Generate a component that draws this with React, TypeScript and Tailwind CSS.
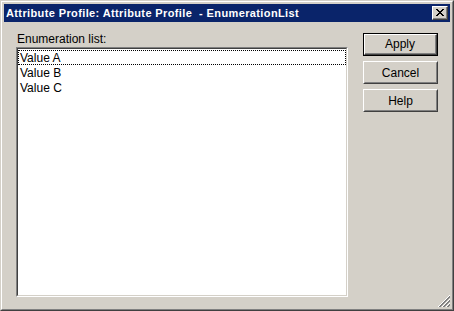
import React from 'react';

const font = { fontFamily: '"Liberation Sans", Arial, sans-serif' };

const CloseGlyph = () => (
  <svg width="8" height="7" viewBox="0 0 8 7" shapeRendering="crispEdges">
    <path
      d="M0 0h2v1H0zM6 0h2v1H6zM1 1h2v1H1zM5 1h2v1H5zM2 2h4v1H2zM3 3h2v1H3zM2 4h4v1H2zM1 5h2v1H1zM5 5h2v1H5zM0 6h2v1H0zM6 6h2v1H6z"
      fill="#000"
    />
  </svg>
);

const SizeGrip = () => (
  <svg width="12" height="12" viewBox="0 0 12 12" shapeRendering="crispEdges">
    {[0, 4, 8].map((o) => (
      <g key={o}>
        <path d={`M${o} 12 L12 ${o}`} stroke="#ffffff" strokeWidth="1" />
        <path d={`M${o + 1} 12 L12 ${o + 1}`} stroke="#808080" strokeWidth="1" />
        <path d={`M${o + 2} 12 L12 ${o + 2}`} stroke="#808080" strokeWidth="1" />
      </g>
    ))}
  </svg>
);

const Button: React.FC<{ label: string; isDefault?: boolean }> = ({ label, isDefault }) => {
  if (isDefault) {
    return (
      <div className="w-[75px] h-[23px] border border-black">
        <div className="w-full h-full border border-t-white border-l-white border-r-[#404040] border-b-[#404040]">
          <div className="w-full h-full flex items-center justify-center border-r border-b border-[#808080] text-[12px] text-black">
            {label}
          </div>
        </div>
      </div>
    );
  }
  return (
    <div className="w-[75px] h-[23px] border border-t-white border-l-white border-r-[#404040] border-b-[#404040]">
      <div className="w-full h-full flex items-center justify-center border-t border-l border-t-[#d4d0c8] border-l-[#d4d0c8] border-r border-b border-r-[#808080] border-b-[#808080] text-[12px] text-black">
        {label}
      </div>
    </div>
  );
};

const items = ['Value A', 'Value B', 'Value C'];

const App: React.FC = () => {
  return (
    <div
      className="relative w-[454px] h-[311px] bg-[#d4d0c8] border border-t-[#d4d0c8] border-l-[#d4d0c8] border-r-[#404040] border-b-[#404040]"
      style={font}
    >
      <div className="w-full h-full border border-t-white border-l-white border-r-[#808080] border-b-[#808080] p-[2px] flex flex-col">
        {/* Title bar */}
        <div className="h-[18px] bg-[#0a246a] flex items-center justify-between pl-[2px] pr-[2px]">
          <span className="text-white font-bold text-[11px] tracking-[0.38px] whitespace-pre leading-[18px]">
            {'Attribute Profile: Attribute Profile  - EnumerationList'}
          </span>
          <div className="w-[16px] h-[14px] bg-[#d4d0c8] border border-t-white border-l-white border-r-[#404040] border-b-[#404040]">
            <div className="w-full h-full border-r border-b border-[#808080] flex items-start justify-start pl-[3px] pt-[2px]">
              <CloseGlyph />
            </div>
          </div>
        </div>

        {/* Body */}
        <div className="flex-1 flex pl-[12px] pr-[11px]">
          <div className="w-[332px] pt-[9px] flex flex-col">
            <div className="h-[16px] leading-[16px] text-[12px] text-black pl-[1px]">Enumeration list:</div>
            <div className="w-[332px] h-[250px] bg-white border border-t-[#808080] border-l-[#808080] border-r-white border-b-white">
              <div className="w-full h-full border border-t-[#404040] border-l-[#404040] border-r-[#d4d0c8] border-b-[#d4d0c8] pt-[1px]">
                {items.map((it, i) => (
                  <div
                    key={it}
                    className={
                      'h-[15px] leading-[15px] text-[12px] text-black px-[1px] border ' +
                      (i === 0 ? 'border-dotted border-black' : 'border-transparent')
                    }
                  >
                    {it}
                  </div>
                ))}
              </div>
            </div>
          </div>
          <div className="ml-[15px] pt-[11px] flex flex-col gap-[5px]">
            <Button label="Apply" isDefault />
            <Button label="Cancel" />
            <Button label="Help" />
          </div>
        </div>
      </div>
      <div className="absolute right-[3px] bottom-[3px]">
        <SizeGrip />
      </div>
    </div>
  );
};

export default App;
